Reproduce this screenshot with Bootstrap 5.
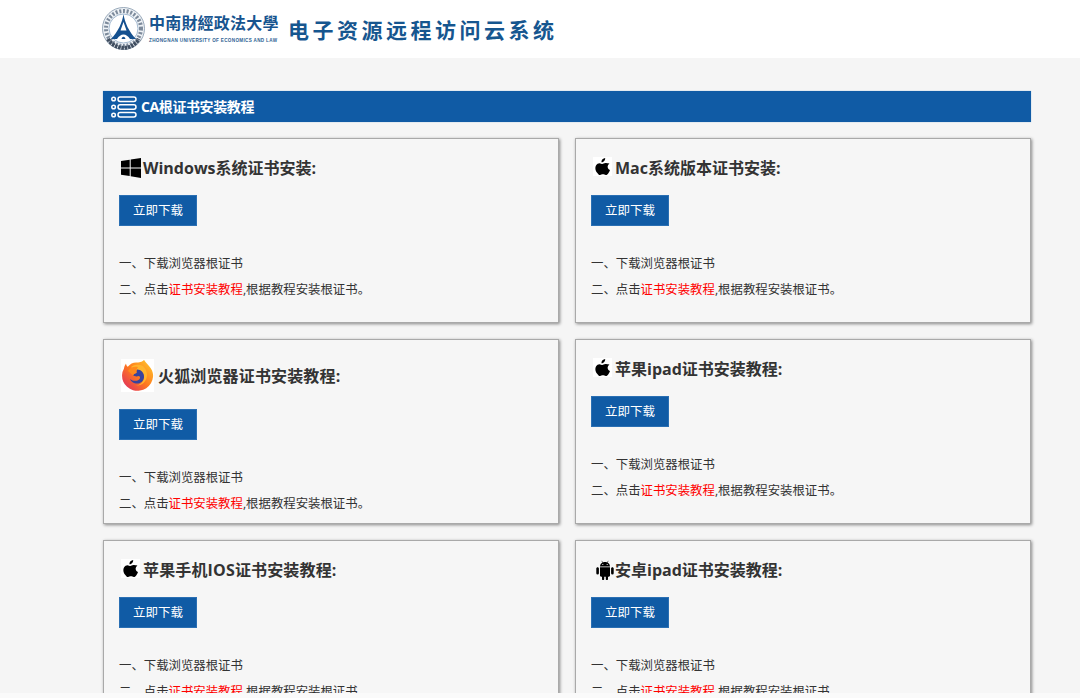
<!DOCTYPE html>
<html lang="zh-CN">
<head>
<meta charset="utf-8">
<title>CA根证书安装教程</title>
<link href="https://cdn.jsdelivr.net/npm/bootstrap@5.3.0/dist/css/bootstrap.min.css" rel="stylesheet">
<style>
html,body{height:698px;overflow:hidden;}
body{background:#fafafa;font-family:"Open Sans","Noto Sans CJK SC",sans-serif;color:#333;font-size:12.4px;}
.frame-clip{height:693px;overflow:hidden;background:#f5f5f5;}
.top-strip{height:58px;background:#fff;padding-left:102px;}
.seal{width:43px;height:43px;margin-top:7px;flex:none;}
.brand-text{margin-left:4px;margin-top:12px;width:132px;}
.brand-cn{font-family:"Noto Sans CJK TC",sans-serif;font-size:16px;font-weight:700;line-height:21px;color:#17548f;letter-spacing:.2px;white-space:nowrap;}
.brand-en{font-family:"Liberation Sans",sans-serif;font-size:4.6px;font-weight:700;line-height:6px;color:#2d5f93;white-space:nowrap;margin-top:5px;letter-spacing:.33px;}
.sys-name{font-family:"Noto Sans CJK SC",sans-serif;font-size:21px;font-weight:700;letter-spacing:3.5px;color:#16568f;margin-left:7px;margin-top:14px;line-height:30px;white-space:nowrap;}
.page-wrap{width:928px;margin:33px 0 0 103px;}
.head-bar{height:31px;background:#105ba5;color:#fff;font-size:14px;font-weight:700;line-height:33px;padding-left:8px;gap:4px;letter-spacing:-.4px;box-shadow:0 0 1px #8fb6dc;}
.tile{background:#f6f6f6;border:1px solid #a9a9a9;box-shadow:1px 1px 3px rgba(0,0,0,.45);padding:15px;height:185px;}
.tile-title{font-size:16px;font-weight:700;line-height:24px;margin:2px 0 15px;color:#333;gap:3px;min-height:24px;}
.title-wide{letter-spacing:.15px;}
.title-fox{margin:4px 0 17px;gap:4px;}
.ico-win{margin-left:2px;margin-right:-1px;}
.ico-apple{margin-left:2px;margin-top:-3px;background:#fff;display:block;flex:none;}
.ico-droid{margin-left:5px;margin-right:-2px;}
.ico-fox{margin-left:2px;background:#fff;display:block;flex:none;}
.dl-btn{background:#105ba5;border-color:#2a6fb3;color:#fff;border-radius:0;font-size:12.5px;width:78px;height:31px;padding:0;line-height:30px;margin-bottom:25px;}
.dl-btn:hover{background:#105ba5;color:#fff;}
.step{line-height:26px;margin:0;white-space:nowrap;}
.step a{color:#f00;text-decoration:none;}
.row-tight{--bs-gutter-x:16px;--bs-gutter-y:16px;}
</style>
</head>
<body>
<div class="frame-clip">
<header class="top-strip d-flex">
  <svg class="seal" viewBox="0 0 43 43" role="img" aria-label="校徽">
    <circle cx="21.5" cy="21.5" r="21" fill="#eef2f6" stroke="#7f93a8" stroke-width=".8"/>
    <circle cx="21.500" cy="21.500" r="17.500" fill="none" stroke="#55677c" stroke-width="4" stroke-dasharray="2 1.700" opacity=".75"/>
    <path d="M6 32a18 18 0 0 0 31 0" fill="none" stroke="#3f4d5f" stroke-width="4" stroke-dasharray="2.500 .8"/>
    <circle cx="21.5" cy="21.5" r="14.5" fill="#fff" stroke="#7d9cbc" stroke-width=".7"/>
    <path d="M21.500 7C22.500 15 27 25 34 32H9C16 25 20.500 15 21.500 7Z" fill="#14508f"/>
    <path d="M21.500 15 24.500 23.500H18.500Z" fill="#fff"/>
    <path d="M15 32C17 29 19 27.500 21.500 27.500S26 29 28 32Z" fill="#fff"/>
    <path d="M19.500 32C20 30.500 20.500 29.800 21.500 29.800S23 30.500 23.500 32Z" fill="#14508f"/>
  </svg>
  <div class="brand-text">
    <div class="brand-cn">中南財經政法大學</div>
    <div class="brand-en">ZHONGNAN UNIVERSITY OF ECONOMICS AND LAW</div>
  </div>
  <div class="sys-name">电子资源远程访问云系统</div>
</header>
<main class="page-wrap">
  <div class="head-bar d-flex align-items-center">
    <svg width="26" height="22" viewBox="0 0 26 22" fill="none" stroke="#fff" stroke-width="1.5" aria-hidden="true">
      <circle cx="2.6" cy="3" r="1.8"/><circle cx="2.6" cy="11" r="1.8"/><circle cx="2.6" cy="19" r="1.8"/>
      <rect x="7" y="1" width="18" height="4.4" rx="2.2"/><rect x="7" y="8.8" width="18" height="4.4" rx="2.2"/><rect x="7" y="16.6" width="18" height="4.4" rx="2.2"/>
    </svg>
    <span>CA根证书安装教程</span>
  </div>
  <div class="pt-3">
  <div class="row row-tight">
    <div class="col-6">
      <section class="tile">
        <h2 class="tile-title d-flex align-items-center">
          <svg class="ico-win" width="20" height="20" viewBox="0 0 20 20" aria-hidden="true"><path d="M0 3 8.700 1.800V9.400H0ZM9.700 1.600 20 0V9.400H9.700ZM0 10.400H8.700V18L0 16.800ZM9.700 10.400H20V20L9.700 18.200Z" fill="#000"/></svg>
          <span>Windows系统证书安装:</span>
        </h2>
        <a class="btn dl-btn d-block" href="#">立即下载</a>
        <p class="step">一、下载浏览器根证书</p>
        <p class="step">二、点击<a href="#">证书安装教程</a>,根据教程安装根证书。</p>
      </section>
    </div>
    <div class="col-6">
      <section class="tile">
        <h2 class="tile-title d-flex align-items-center">
          <svg class="ico-apple" width="19" height="19" viewBox="2 0 16 18.500" aria-hidden="true"><path d="M12.600 1C12.700 2.300 12.200 3.300 11.600 4 10.900 4.800 9.900 5.300 9 5.200 8.900 4 9.400 3 10 2.300 10.700 1.500 11.700 1.100 12.600 1ZM16.800 6.500C15.700 7.200 15 8.200 15 9.500 15 11 15.900 12.200 17.300 12.700 16.900 13.800 16.400 14.800 15.700 15.800 15 16.700 14.300 17.600 13.200 17.600S11.700 16.900 10.400 16.900 8.700 17.600 7.600 17.600 5.800 16.700 5 15.600C3.300 13.900 2.300 10.500 3.800 8 4.500 6.800 5.800 6 7.100 6 8.200 6 9.200 6.800 9.900 6.800S11.500 5.900 12.900 5.900C13.500 5.900 15.400 6.100 16.800 6.500Z" fill="#000"/></svg>
          <span>Mac系统版本证书安装:</span>
        </h2>
        <a class="btn dl-btn d-block" href="#">立即下载</a>
        <p class="step">一、下载浏览器根证书</p>
        <p class="step">二、点击<a href="#">证书安装教程</a>,根据教程安装根证书。</p>
      </section>
    </div>
    <div class="col-6">
      <section class="tile">
        <h2 class="tile-title title-fox title-wide d-flex align-items-center">
          <svg class="ico-fox" width="33" height="33" viewBox="0 0 33 33" aria-hidden="true">
            <defs>
              <linearGradient id="ffa" x1="1" y1="0" x2="0" y2="1"><stop offset="0" stop-color="#ffd02e"/><stop offset=".5" stop-color="#ff7a1f"/><stop offset="1" stop-color="#dc2468"/></linearGradient>
            </defs>
            <path d="M23 .8C24 3 26 4.500 28 7 31 10.500 32.500 14 32 18A15.500 15 0 1 1 3 9.500C3.300 7.500 4 6 5 4.500 5.200 6 5.800 7 6.800 7.800 9 5 12 3.500 15 3.500 18 3.500 21 3.500 23 .8Z" fill="url(#ffa)"/>
            <path d="M10 8C13 5.500 18 5 22 7 24 9 26 12 26 16 26 22 21 27 15 26.500 19 26 23 23 23 18 23 14 20 11 16 11 13 11 11.500 10 10 8Z" fill="#ffb52e"/>
            <path d="M16 10.500C20 10.500 23.500 14 23 18.500 22.500 22.500 19 25 15 24.500 12 24 10 22.500 9 20 11.500 22 15 22.500 17.500 21 19.500 19.800 19.500 17.500 18 17 15.500 17.800 13.500 17.500 12 16 13 15 14 14.300 15.500 14 15.500 12.800 15.500 11.500 16 10.500Z" fill="#37439e"/>
            <path d="M7 12C9 8.500 13 7 17 8 15.800 9.500 15 11.500 15.500 14 13.500 14.500 12.500 15.500 12 16.500 11 15 9 14 7 12Z" fill="#ff8a1d"/>
          </svg>
          <span>火狐浏览器证书安装教程:</span>
        </h2>
        <a class="btn dl-btn d-block" href="#">立即下载</a>
        <p class="step">一、下载浏览器根证书</p>
        <p class="step">二、点击<a href="#">证书安装教程</a>,根据教程安装根证书。</p>
      </section>
    </div>
    <div class="col-6">
      <section class="tile">
        <h2 class="tile-title d-flex align-items-center">
          <svg class="ico-apple" width="19" height="19" viewBox="2 0 16 18.500" aria-hidden="true"><path d="M12.600 1C12.700 2.300 12.200 3.300 11.600 4 10.900 4.800 9.900 5.300 9 5.200 8.900 4 9.400 3 10 2.300 10.700 1.500 11.700 1.100 12.600 1ZM16.800 6.500C15.700 7.200 15 8.200 15 9.500 15 11 15.900 12.200 17.300 12.700 16.900 13.800 16.400 14.800 15.700 15.800 15 16.700 14.300 17.600 13.200 17.600S11.700 16.900 10.400 16.900 8.700 17.600 7.600 17.600 5.800 16.700 5 15.600C3.300 13.900 2.300 10.500 3.800 8 4.500 6.800 5.800 6 7.100 6 8.200 6 9.200 6.800 9.900 6.800S11.500 5.900 12.900 5.900C13.500 5.900 15.400 6.100 16.800 6.500Z" fill="#000"/></svg>
          <span>苹果ipad证书安装教程:</span>
        </h2>
        <a class="btn dl-btn d-block" href="#">立即下载</a>
        <p class="step">一、下载浏览器根证书</p>
        <p class="step">二、点击<a href="#">证书安装教程</a>,根据教程安装根证书。</p>
      </section>
    </div>
    <div class="col-6">
      <section class="tile">
        <h2 class="tile-title title-wide d-flex align-items-center">
          <svg class="ico-apple" width="19" height="19" viewBox="2 0 16 18.500" aria-hidden="true"><path d="M12.600 1C12.700 2.300 12.200 3.300 11.600 4 10.900 4.800 9.900 5.300 9 5.200 8.900 4 9.400 3 10 2.300 10.700 1.500 11.700 1.100 12.600 1ZM16.800 6.500C15.700 7.200 15 8.200 15 9.500 15 11 15.900 12.200 17.300 12.700 16.900 13.800 16.400 14.800 15.700 15.800 15 16.700 14.300 17.600 13.200 17.600S11.700 16.900 10.400 16.900 8.700 17.600 7.600 17.600 5.800 16.700 5 15.600C3.300 13.900 2.300 10.500 3.800 8 4.500 6.800 5.800 6 7.100 6 8.200 6 9.200 6.800 9.900 6.800S11.500 5.900 12.900 5.900C13.500 5.900 15.400 6.100 16.800 6.500Z" fill="#000"/></svg>
          <span>苹果手机IOS证书安装教程:</span>
        </h2>
        <a class="btn dl-btn d-block" href="#">立即下载</a>
        <p class="step">一、下载浏览器根证书</p>
        <p class="step">二、点击<a href="#">证书安装教程</a>,根据教程安装根证书。</p>
      </section>
    </div>
    <div class="col-6">
      <section class="tile">
        <h2 class="tile-title d-flex align-items-center">
          <svg class="ico-droid" width="18" height="20" viewBox="0 0 18 20" aria-hidden="true"><path d="M4 7.200H14V15.500C14 16.200 13.500 16.700 12.800 16.700H12V19A1.100 1.100 0 0 1 9.800 19V16.700H8.200V19A1.100 1.100 0 0 1 6 19V16.700H5.200C4.500 16.700 4 16.200 4 15.500ZM1.600 7.200C2.300 7.200 2.900 7.800 2.900 8.500V13.200A1.300 1.300 0 0 1 .3 13.200V8.500C.3 7.800.9 7.200 1.600 7.200ZM16.400 7.200C17.100 7.200 17.700 7.800 17.700 8.500V13.200A1.300 1.300 0 0 1 15.100 13.200V8.500C15.100 7.800 15.700 7.200 16.400 7.200ZM4 6.500C4.100 4.800 5 3.400 6.400 2.600L5.500 1.100 5.900.8 6.900 2.400C7.500 2.100 8.200 2 9 2S10.500 2.100 11.100 2.400L12.100.8 12.500 1.100 11.600 2.600C13 3.400 13.900 4.800 14 6.500Z" fill="#000"/><circle cx="6.800" cy="4.500" r=".6" fill="#f6f6f6"/><circle cx="11.200" cy="4.500" r=".6" fill="#f6f6f6"/></svg>
          <span>安卓ipad证书安装教程:</span>
        </h2>
        <a class="btn dl-btn d-block" href="#">立即下载</a>
        <p class="step">一、下载浏览器根证书</p>
        <p class="step">二、点击<a href="#">证书安装教程</a>,根据教程安装根证书。</p>
      </section>
    </div>
  </div>
  </div>
</main>
</div>
</body>
</html>
